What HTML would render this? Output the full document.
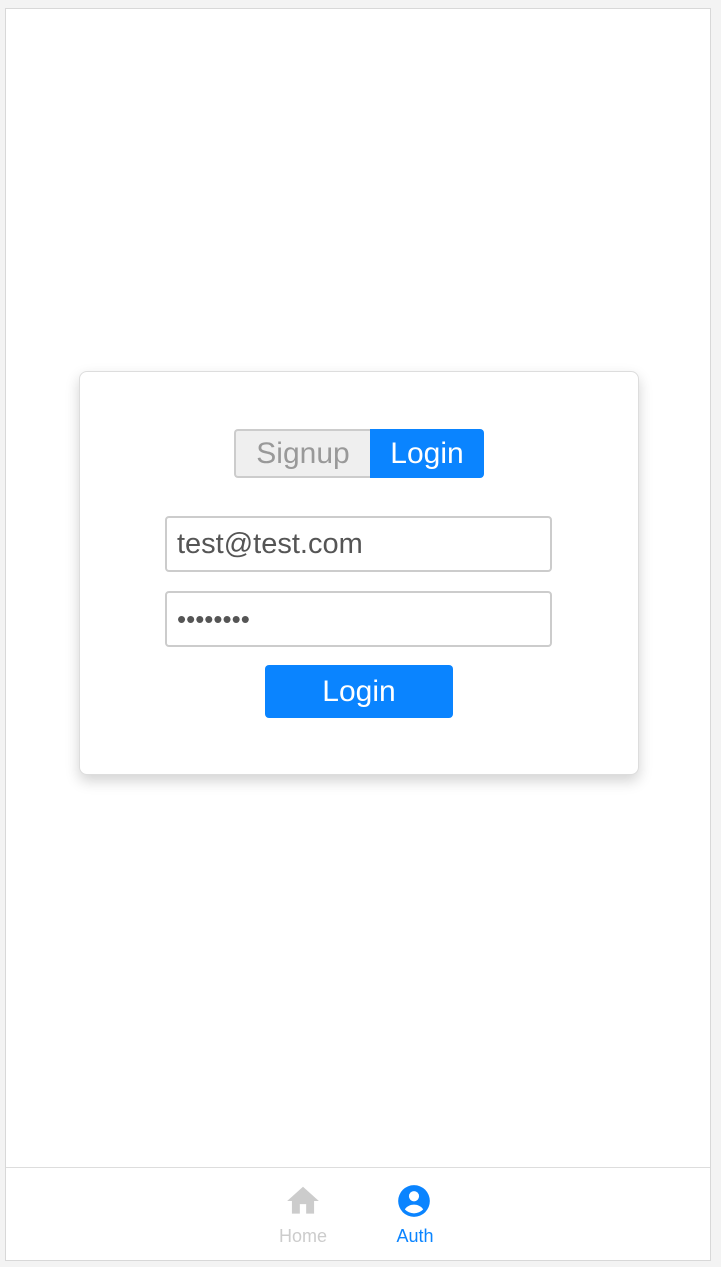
<!DOCTYPE html>
<html><head><style>
body{margin:0;width:721px;height:1267px;background:#f3f3f3;font-family:"Liberation Sans",sans-serif;position:relative;overflow:hidden}
.frame{position:absolute;left:5px;top:8px;width:704px;height:1251px;background:#fff;border:1px solid #d8d8d8}
.card{position:absolute;left:73px;top:362px;width:558px;height:402px;border:1px solid #ddd;border-radius:8px;box-shadow:0 6px 14px rgba(0,0,0,0.18);background:#fff}
.abs{position:absolute;box-sizing:border-box}
.sign{left:228px;top:420px;width:136px;height:49px;background:#efefef;border:2px solid #ccc;border-right:none;border-radius:4px 0 0 4px;color:#999;font-size:30px;text-align:center;line-height:45px}
.log{left:364px;top:420px;width:114px;height:49px;background:#0a84ff;border-radius:0 4px 4px 0;color:#fff;font-size:30px;text-align:center;line-height:49px}
.inp{left:159px;width:387px;height:56px;border:2px solid #ccc;border-radius:4px;font-size:29px;color:#555;padding-left:10px;line-height:52px}
.btn{left:259px;top:656px;width:188px;height:53px;background:#0a84ff;border-radius:4px;color:#fff;font-size:30px;text-align:center;line-height:53px}
.nav{position:absolute;left:0;top:1158px;width:704px;border-top:1px solid #ddd;height:93px}
.lbl{position:absolute;font-size:18px;top:1217px;transform:translateX(-50%)}
</style></head><body>
<div class="frame">
<div class="card"></div>
<div class="abs sign">Signup</div>
<div class="abs log">Login</div>
<div class="abs inp" style="top:507px">test@test.com</div>
<div class="abs inp" style="top:582px;font-size:26px">••••••••</div>
<div class="abs btn">Login</div>
<div class="nav"></div>
<svg style="position:absolute;left:278px;top:1173px" width="38" height="38" viewBox="0 0 24 24"><path d="M10 20v-6h4v6h5v-8h3L12 3 2 12h3v8z" fill="#ccc"/></svg>
<div class="lbl" style="left:297px;color:#ccc">Home</div>
<svg style="position:absolute;left:389px;top:1173px" width="38" height="38" viewBox="0 0 24 24"><circle cx="12" cy="12" r="10" fill="#0a84ff"/><circle cx="12" cy="9" r="3.2" fill="#fff"/><path d="M6.2 17.3c1.3-2 3.5-3 5.8-3s4.5 1 5.8 3A8 8 0 0 1 6.2 17.3z" fill="#fff"/></svg>
<div class="lbl" style="left:409px;color:#0a84ff">Auth</div>
</div>
</body></html>
